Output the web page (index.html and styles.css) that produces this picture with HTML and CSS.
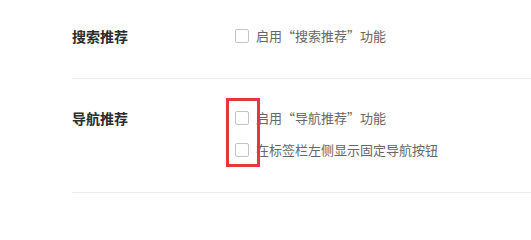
FILE: index.html
```html
<!DOCTYPE html>
<html lang="zh-CN">
<head>
<meta charset="utf-8">
<link rel="stylesheet" href="styles.css">
</head>
<body>
<div class="settings">
  <div class="section">
    <div class="label">搜索推荐</div>
    <div class="options">
      <label class="option"><span class="box"></span><span class="text">启用“搜索推荐”功能</span></label>
    </div>
  </div>
  <div class="section">
    <div class="label">导航推荐</div>
    <div class="options">
      <label class="option"><span class="box"></span><span class="text">启用“导航推荐”功能</span></label>
      <label class="option"><span class="box"></span><span class="text">在标签栏左侧显示固定导航按钮</span></label>
      <div class="highlight"></div>
    </div>
  </div>
</div>
</body>
</html>
```
FILE: styles.css
```css
html, body {
  margin: 0;
  padding: 0;
  background: #ffffff;
}
body {
  font-family: "Noto Sans CJK SC", "Noto Sans", sans-serif;
}
.settings {
  margin-left: 72px;
}
.section {
  display: grid;
  grid-template-columns: 163px 1fr;
  padding: 23px 0 26px;
  border-bottom: 1px solid #ececec;
}
.section:first-child {
  padding-top: 20px;
}
.label {
  font-size: 14px;
  font-weight: 700;
  color: #2b2b2b;
  line-height: 32px;
  height: 32px;
}
.options {
  position: relative;
  display: flex;
  flex-direction: column;
}
.option {
  display: flex;
  align-items: center;
  height: 32px;
  font-size: 13px;
  color: #666666;
}
.box {
  width: 12px;
  height: 12px;
  border: 1px solid #c4c4c4;
  border-radius: 2px;
  background: #fff;
  margin-right: 7px;
  flex: none;
}
.text {
  line-height: 32px;
}
.highlight {
  position: absolute;
  left: -9px;
  top: -4px;
  width: 28px;
  height: 63px;
  border: 3px solid #e5383b;
}
```
